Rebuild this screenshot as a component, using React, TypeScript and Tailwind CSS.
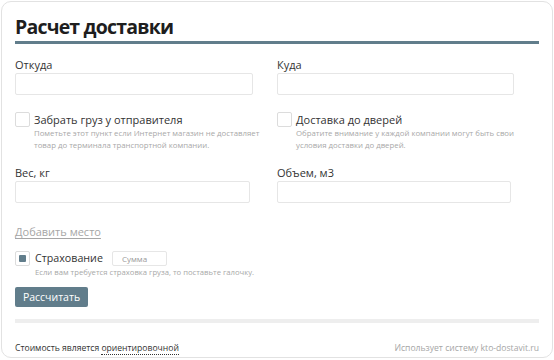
const font = { fontFamily: '"Open Sans", "Noto Sans", sans-serif' };

function Field({ label, width }: { label: string; width: string }) {
  return (
    <div>
      <div className="text-[11px] leading-[16px] text-[#333] h-[16px]">{label}</div>
      <div className={`h-[22px] border border-[#e6e6e6] rounded-[2px] bg-white ${width}`} />
    </div>
  );
}

function Check({ label, hint }: { label: string; hint: string }) {
  return (
    <div>
      <div className="flex items-center h-[15px] gap-[4px]">
        <div className="w-[15px] h-[15px] border border-[#dcdcdc] rounded-[2px] bg-white" />
        <span className="text-[11px] leading-[15px] text-[#333]">{label}</span>
      </div>
      <p className="pl-[19px] text-[7.8px] leading-[12px] text-[#a8a8a8] w-[250px]">{hint}</p>
    </div>
  );
}

export default function App() {
  return (
    <div className="bg-white w-[554px] h-[360px] pt-[1px] pl-[1px]" style={font}>
      <div className="w-[552px] h-[357px] border border-[#e2e2e2] rounded-[10px] px-[13px]">
        <h1 className="pt-[12px] text-[19.5px] leading-[26px] font-bold text-[#1e1e1e] tracking-[-0.8px]">
          Расчет доставки
        </h1>
        <div className="mt-[1px] h-[3px] bg-[#617d8b]" />

        <div className="grid grid-cols-[262px_1fr] mt-[13px]">
          <Field label="Откуда" width="w-[238px]" />
          <Field label="Куда" width="w-[237px]" />
        </div>

        <div className="grid grid-cols-[262px_1fr] mt-[17px]">
          <Check
            label="Забрать груз у отправителя"
            hint="Пометьте этот пункт если Интернет магазин не доставляет товар до терминала транспортной компании."
          />
          <Check
            label="Доставка до дверей"
            hint="Обратите внимание у каждой компании могут быть свои условия доставки до дверей."
          />
        </div>

        <div className="grid grid-cols-[262px_1fr] mt-[14px]">
          <Field label="Вес, кг" width="w-[235px]" />
          <Field label="Объем, м3" width="w-[234px]" />
        </div>

        <div className="mt-[15px] h-[16px]">
          <a className="text-[11px] leading-[16px] text-[#a6a6a6] underline underline-offset-[2px]">
            Добавить место
          </a>
        </div>

        <div className="mt-[17px] flex items-center h-[15px]">
          <div className="w-[15px] h-[15px] border border-[#dcdcdc] rounded-[2px] bg-white flex items-center justify-center">
            <div className="w-[7px] h-[7px] bg-[#617d8b] rounded-[1px]" />
          </div>
          <span className="ml-[5px] text-[10.7px] leading-[15px] text-[#333]">Страхование</span>
          <div className="ml-[9px] w-[55px] h-[15px] border border-[#e6e6e6] rounded-[2px] px-[9px] text-[8px] leading-[13px] text-[#999]">
            Сумма
          </div>
        </div>
        <p className="pl-[20px] text-[7.7px] leading-[12px] text-[#a8a8a8]">
          Если вам требуется страховка груза, то поставьте галочку.
        </p>

        <button className="block mt-[9px] w-[73px] h-[20px] bg-[#617d8b] rounded-[2px] text-white text-[10.5px] leading-[20px]">
          Рассчитать
        </button>

        <div className="mt-[12px] h-[4px] bg-[#eeeeee]" />

        <div className="mt-[18px] flex justify-between text-[8.6px] leading-[14px]">
          <span className="text-[#333]">
            Стоимость является{" "}
            <span className="border-b border-dotted border-[#333]">ориентировочной</span>
          </span>
          <span className="text-[#a6a6a6]">Использует систему kto-dostavit.ru</span>
        </div>
      </div>
    </div>
  );
}
